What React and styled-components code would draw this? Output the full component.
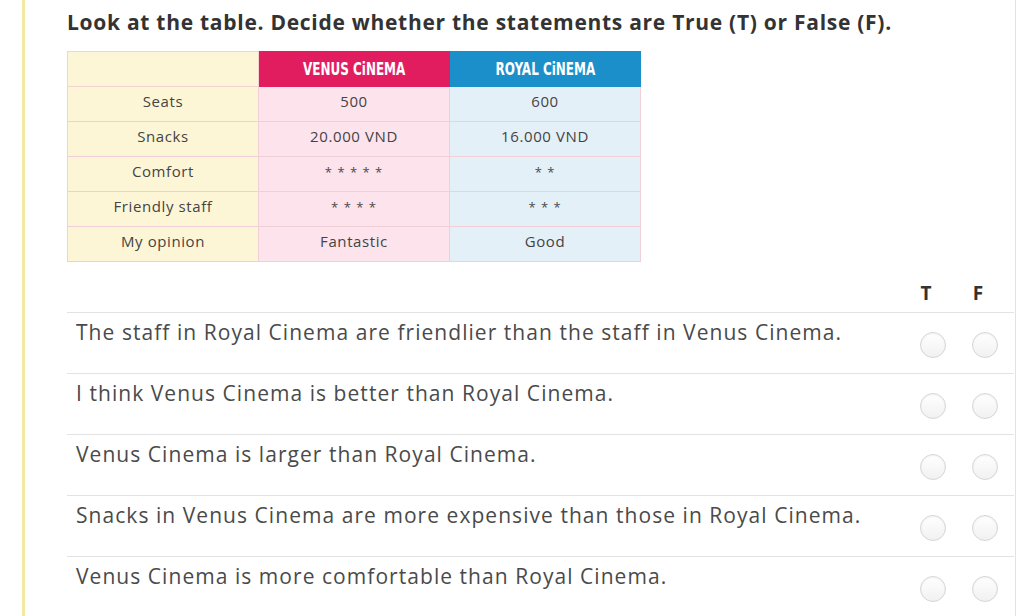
import styled, { createGlobalStyle } from "styled-components";

const GlobalStyle = createGlobalStyle`
  body {
    margin: 0;
    background: #ffffff;
    font-family: "Open Sans", "Liberation Sans", sans-serif;
  }
`;

const Frame = styled.div`
  margin-left: 22px;
  width: 994px;
  min-height: 616px;
  border-left: 3px solid #f3e9a3;
  border-right: 1px solid #e2e2e2;
  padding: 10px 0 0 42px;
  box-sizing: border-box;
`;

const Title = styled.h1`
  margin: 0;
  font-size: 21px;
  line-height: 24px;
  font-weight: 700;
  letter-spacing: 0.72px;
  color: #333333;
`;

const Table = styled.table`
  margin-top: 17px;
  border-collapse: collapse;
  width: 574px;
  table-layout: fixed;
`;

const HeadCell = styled.th`
  height: 34px;
  padding: 0;
  background: ${(p) => p.$bg};
  border: 1px solid ${(p) => (p.$bg === "#fdf6d6" ? "#f2d3cf" : p.$bg)};
`;

const HeadLabel = styled.span`
  display: inline-block;
  color: #ffffff;
  font-family: "Liberation Sans Narrow", "DejaVu Sans Condensed", sans-serif;
  font-size: 18px;
  font-weight: 700;
  transform: scaleX(0.74);
`;

const Cell = styled.td`
  height: 28px;
  padding: 0 0 6px;
  text-align: center;
  font-size: 15px;
  letter-spacing: 0.6px;
  color: #444444;
  background: ${(p) => p.$bg};
  border: 1px solid #f2cfd6;
`;

const Stars = styled.span`
  font-size: 13px;
  letter-spacing: 1px;
  color: #4a4a4a;
`;

const Quiz = styled.div`
  margin-top: 19px;
  width: 947px;
`;

const TFHeader = styled.div`
  display: flex;
  justify-content: flex-end;
  padding-right: 3px;
  height: 31px;
`;

const TFLabel = styled.div`
  width: 52px;
  padding-right: 14px;
  box-sizing: border-box;
  text-align: center;
  font-size: 19px;
  font-weight: 700;
  color: #333333;
  line-height: 24px;
`;

const Row = styled.div`
  display: grid;
  grid-template-columns: 1fr 52px 52px;
  padding-right: 3px;
  height: 61px;
  border-top: 1px solid #e3e3e3;
  box-sizing: border-box;
`;

const Statement = styled.div`
  padding: 7px 0 0 9px;
  font-size: 21px;
  line-height: 24px;
  letter-spacing: 1.05px;
  color: #4a4a4a;
`;

const RadioCell = styled.div`
  display: flex;
  justify-content: center;
  padding-top: 19px;
`;

const Radio = styled.span`
  width: 26px;
  height: 26px;
  border-radius: 50%;
  border: 1px solid #d6d6d6;
  background: linear-gradient(#ffffff, #f1f1f1);
  box-shadow: inset 0 1px 2px rgba(0, 0, 0, 0.06);
  box-sizing: border-box;
`;

const rows = [
  ["Seats", "500", "600"],
  ["Snacks", "20.000 VND", "16.000 VND"],
  ["Comfort", "*****", "**"],
  ["Friendly staff", "****", "***"],
  ["My opinion", "Fantastic", "Good"],
];

const statements = [
  "The staff in Royal Cinema are friendlier than the staff in Venus Cinema.",
  "I think Venus Cinema is better than Royal Cinema.",
  "Venus Cinema is larger than Royal Cinema.",
  "Snacks in Venus Cinema are more expensive than those in Royal Cinema.",
  "Venus Cinema is more comfortable than Royal Cinema.",
];

const renderValue = (v) =>
  v.startsWith("*") ? <Stars>{v.split("").join(" ")}</Stars> : v;

export default function App() {
  return (
    <>
      <GlobalStyle />
      <Frame>
        <Title>
          Look at the table. Decide whether the statements are True (T) or False (F).
        </Title>
        <Table>
          <thead>
            <tr>
              <HeadCell $bg="#fdf6d6" />
              <HeadCell $bg="#e11d5f">
                <HeadLabel>VENUS CiNEMA</HeadLabel>
              </HeadCell>
              <HeadCell $bg="#1b8fca">
                <HeadLabel>ROYAL CiNEMA</HeadLabel>
              </HeadCell>
            </tr>
          </thead>
          <tbody>
            {rows.map(([label, venus, royal]) => (
              <tr key={label}>
                <Cell $bg="#fdf6d6">{label}</Cell>
                <Cell $bg="#fce3ec">{renderValue(venus)}</Cell>
                <Cell $bg="#e4f0f8">{renderValue(royal)}</Cell>
              </tr>
            ))}
          </tbody>
        </Table>
        <Quiz>
          <TFHeader>
            <TFLabel>T</TFLabel>
            <TFLabel>F</TFLabel>
          </TFHeader>
          {statements.map((s) => (
            <Row key={s}>
              <Statement>{s}</Statement>
              <RadioCell>
                <Radio />
              </RadioCell>
              <RadioCell>
                <Radio />
              </RadioCell>
            </Row>
          ))}
        </Quiz>
      </Frame>
    </>
  );
}
